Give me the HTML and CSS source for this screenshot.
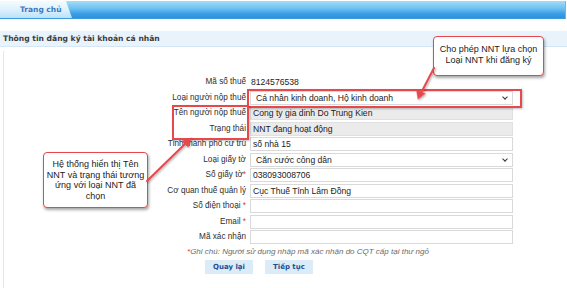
FILE: index.html
```html
<!DOCTYPE html>
<html lang="vi">
<head>
    <meta charset="UTF-8">
    <title>Thông tin đăng ký tài khoản cá nhân</title>
    <link rel="stylesheet" href="styles.css">
</head>
<body>
    <div class="page">
        <div class="topbar">
            <div class="tab">Trang chủ</div>
        </div>

        <div class="section-title">Thông tin đăng ký tài khoản cá nhân</div>

        <div class="panel">
            <div class="form">
                <label>Mã số thuế</label>
                <div class="plain">8124576538</div>

                <label>Loại người nộp thuế</label>
                <div class="field select">Cá nhân kinh doanh, Hộ kinh doanh<span class="chev"></span></div>

                <label>Tên người nộp thuế</label>
                <div class="field readonly">Cong ty gia dinh Do Trung Kien</div>

                <label>Trạng thái</label>
                <div class="field readonly">NNT đang hoạt động</div>

                <label>Tỉnh/thành phố cư trú</label>
                <div class="field">số nhà 15</div>

                <label>Loại giấy tờ</label>
                <div class="field select">Căn cước công dân<span class="chev"></span></div>

                <label>Số giấy tờ<span class="req">*</span></label>
                <div class="field">038093008706</div>

                <label>Cơ quan thuế quản lý</label>
                <div class="field">Cục Thuế Tỉnh Lâm Đồng</div>

                <label>Số điện thoại <span class="req">*</span></label>
                <div class="field"></div>

                <label>Email <span class="req">*</span></label>
                <div class="field"></div>

                <label>Mã xác nhận</label>
                <div class="field"></div>
            </div>

            <p class="note"><span class="req">*</span>Ghi chú: Người sử dụng nhập mã xác nhận do CQT cấp tại thư ngỏ</p>

            <div class="buttons">
                <button class="btn">Quay lại</button>
                <button class="btn">Tiếp tục</button>
            </div>
        </div>

        <!-- chú thích -->
        <div class="mark mark-select"></div>
        <div class="mark mark-labels"></div>

        <div class="callout callout-top">Cho phép NNT lựa chọn<br>Loại NNT khi đăng ký</div>
        <div class="callout callout-left">Hệ thống hiển thị Tên<br>NNT và trạng thái tương<br>ứng với loại NNT đã<br>chọn</div>

        <svg class="arrows" width="567" height="288" viewBox="0 0 567 288">
            <defs>
                <filter id="sh" x="-20%" y="-20%" width="140%" height="140%">
                    <feDropShadow dx="1" dy="1" stdDeviation="0.8" flood-color="#000" flood-opacity="0.35"/>
                </filter>
            </defs>
            <g filter="url(#sh)" fill="#e8474c" stroke="#e8474c" stroke-width="2" stroke-linecap="round">
                <line x1="434" y1="68" x2="421" y2="93"/>
                <polygon points="418,99 416.5,90 425,93.5" stroke-width="0.5"/>
                <line x1="147" y1="181" x2="186" y2="143"/>
                <polygon points="191,138 182,141 188,147" stroke-width="0.5"/>
            </g>
        </svg>
    </div>
</body>
</html>
```

FILE: styles.css
```css
body {
    margin: 0;
    padding: 0;
    background: #ffffff;
    font-family: "Liberation Sans", Arial, sans-serif;
    color: #333;
}
.page {
    position: relative;
    width: 567px;
    height: 288px;
    overflow: hidden;
}
.topbar {
    height: 17px;
    margin: 1px 1px 0 0;
    background: linear-gradient(to bottom, #a6dcf7 0%, #6cc0f0 45%, #3a9ee6 75%, #2f8fdc 100%);
    border-bottom: 1px solid #3c9be0;
    border-right: 1px solid #6fb8e8;
    display: flex;
}
.tab {
    width: 72px;
    padding-left: 20px;
    box-sizing: border-box;
    background: linear-gradient(to bottom, #f4fbff 0%, #dff1fc 50%, #b9e2f8 100%);
    clip-path: polygon(0 0, 66px 0, 72px 100%, 0 100%);
    font-family: "DejaVu Sans", sans-serif;
    font-size: 7.5px;
    font-weight: bold;
    color: #3a78c0;
    line-height: 17px;
}
.section-title {
    margin-top: 12px;
    height: 15px;
    padding-left: 3px;
    background: #e9f3fb;
    border-bottom: 1px solid #d5e6f4;
    font-family: "DejaVu Sans", sans-serif;
    font-size: 7.6px;
    font-weight: bold;
    color: #3c3c3c;
    line-height: 15px;
}
.panel {
    margin: 4px 0 0 3px;
    height: 240px;
    border-left: 1px solid #dbe9f3;
    padding-top: 24px;
    box-sizing: border-box;
}
.form {
    display: grid;
    grid-template-columns: 242px 263px;
    grid-auto-rows: 14px;
    row-gap: 1.5px;
    column-gap: 4px;
}
.form label {
    text-align: right;
    font-size: 8.2px;
    color: #2e2e2e;
    line-height: 14px;
    white-space: nowrap;
}
.req {
    color: #e03b3b;
}
.plain {
    font-size: 8.6px;
    color: #222;
    line-height: 14px;
    padding-left: 1px;
}
.field {
    position: relative;
    height: 14px;
    box-sizing: border-box;
    border: 1px solid #d9d9d9;
    background: #fff;
    padding-left: 2px;
    font-size: 8.6px;
    line-height: 12px;
    color: #222;
    white-space: nowrap;
}
.field.readonly {
    background: #ebebeb;
    border-color: #e0e0e0;
}
.field.select {
    padding-left: 5px;
}
.chev {
    position: absolute;
    right: 5px;
    top: 3px;
    width: 3px;
    height: 3px;
    border-right: 1.2px solid #333;
    border-bottom: 1.2px solid #333;
    transform: rotate(45deg);
}
.note {
    margin: 2px 0 0 183px;
    font-size: 8px;
    font-style: italic;
    color: #6a6a6a;
    line-height: 12px;
}
.buttons {
    display: flex;
    gap: 12px;
    margin: 2px 0 0 201px;
}
.btn {
    height: 14px;
    padding: 0 8px;
    border: none;
    background: #dcebf8;
    font-family: "DejaVu Sans", sans-serif;
    font-size: 7px;
    font-weight: bold;
    color: #1d4f8c;
    line-height: 14px;
}
.mark {
    position: absolute;
    border: 2px solid #e8474c;
    box-shadow: 1px 1px 2px rgba(0,0,0,0.25);
}
.mark-select {
    left: 247px;
    top: 89px;
    width: 271px;
    height: 15px;
}
.mark-labels {
    left: 172px;
    top: 105px;
    width: 73px;
    height: 31px;
}
.callout {
    position: absolute;
    background: #fff;
    border: 1.5px solid #e8474c;
    border-radius: 4px;
    box-shadow: 1px 2px 3px rgba(0,0,0,0.35);
    box-sizing: border-box;
    text-align: center;
    font-size: 9px;
    color: #222;
}
.callout-top {
    left: 433px;
    top: 36px;
    width: 111px;
    height: 40px;
    padding-top: 7px;
    line-height: 10.5px;
}
.callout-left {
    left: 43px;
    top: 152px;
    width: 105px;
    height: 56px;
    padding-top: 6px;
    line-height: 10.7px;
}
.arrows {
    position: absolute;
    left: 0;
    top: 0;
    pointer-events: none;
}
```
